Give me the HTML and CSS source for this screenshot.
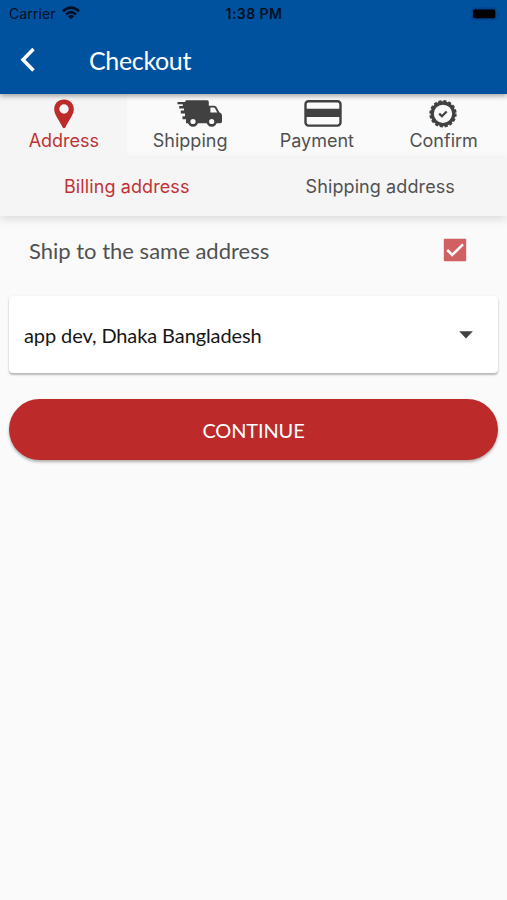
FILE: index.html
```html
<!DOCTYPE html>
<html lang="en">
<head>
<meta charset="utf-8">
<title>Checkout</title>
<link rel="stylesheet" href="styles.css">
</head>
<body>
<header class="appbar">
  <div class="status">
    <div class="carrier"><span>Carrier</span>
      <svg width="18" height="14" viewBox="0 0 18 14"><g fill="none" stroke="#001023" stroke-width="2.6"><path d="M1 5.2Q9-2 17 5.2"/><path d="M4 8.4Q9 4 14 8.4"/></g><path d="M5.9 10.2Q9 7.7 12.1 10.2L9 13.3Z" fill="#001023"/></svg>
    </div>
    <span class="clock">1:38 PM</span>
    <svg class="battery" width="30" height="14" viewBox="0 0 30 14"><rect x=".5" y=".8" width="25" height="12" rx="3.2" fill="#00458a" stroke="#00488f"/><rect x="2" y="2.4" width="22.3" height="8.8" rx="2" fill="#000"/><path d="M27 4.7q2 2.2 0 4.4z" fill="#003f80"/></svg>
  </div>
  <div class="titlebar">
    <svg class="back" width="16" height="26" viewBox="0 0 16 26"><path d="M13.5 2L3 12.7L13.5 23.4" fill="none" stroke="#fff" stroke-width="3.5"/></svg>
    <h1>Checkout</h1>
  </div>
</header>
<nav class="steps">
  <div class="step active">
    <svg width="22" height="30" viewBox="0 0 22 30"><path fill-rule="evenodd" d="M11 .5C5 .5 1.2 4.8 1.2 10.2C1.2 16 7.2 22.6 9.5 28.2Q11 30.2 12.5 28.2C14.8 22.6 20.8 16 20.8 10.2C20.8 4.8 17 .5 11 .5ZM11 5.3a4.7 4.7 0 1 1 0 9.4a4.7 4.7 0 1 1 0-9.4Z" fill="#bd2a2a"/></svg>
    <span>Address</span>
  </div>
  <div class="step">
    <svg class="truck" width="46" height="30" viewBox="0 0 46 30"><g fill="#414141"><path d="M9 1.3H30.2Q31.8 1.3 31.8 3V6.7H36.7Q38.3 6.7 39.5 8L42.3 13.2Q45 14 45 16.5V22.5Q45 24.3 43.2 24.3H9V20.2H5.5V17.2H8V14.6H3.8V11.6H7V9.6H2.2V6.9H5.8V5.3H.5V3H8Z"/></g><path d="M33.4 8.6h3.1q1 0 1.6.8l2.2 4.2h-6.9z" fill="#fafafa"/><g fill="#fafafa" stroke="#414141" stroke-width="2.6"><circle cx="16" cy="22.5" r="3.9"/><circle cx="34.7" cy="22.5" r="3.9"/></g></svg>
    <span>Shipping</span>
  </div>
  <div class="step">
    <svg class="card" width="38" height="30" viewBox="0 0 38 30"><rect x="1.5" y="2.2" width="35" height="24.4" rx="3" fill="none" stroke="#414141" stroke-width="2.4"/><path d="M1 9.8h36v8.2H1z" fill="#414141"/></svg>
    <span>Payment</span>
  </div>
  <div class="step">
    <svg class="badge" width="30" height="30" viewBox="0 0 30 30"><g fill="none" stroke="#414141"><circle cx="15" cy="14.8" r="10.8" stroke-width="3.3"/><circle cx="15" cy="14.8" r="12.5" stroke-width="2.4" stroke-dasharray="3.1 1.809"/><path d="M11.2 14.6l2.7 2.7 4.8-4.8" stroke-width="2.2"/></g></svg>
    <span>Confirm</span>
  </div>
</nav>
<nav class="subtabs">
  <span class="subtab active">Billing address</span>
  <span class="subtab">Shipping address</span>
</nav>
<main>
  <label class="same"><span>Ship to the same address</span>
    <svg width="24" height="24" viewBox="0 0 24 24"><rect x=".8" y=".8" width="22.4" height="22.4" rx="1" fill="#d16063"/><path d="M4.2 12l5 5L20 6.3" fill="none" stroke="#fff" stroke-width="2.5"/></svg>
  </label>
  <div class="select"><span>app dev, Dhaka Bangladesh</span>
    <svg width="14" height="8" viewBox="0 0 14 8"><path d="M.2.3h13.6L7 7.4z" fill="#424242"/></svg>
  </div>
  <button class="continue"><span>CONTINUE</span></button>
</main>
</body>
</html>
```
FILE: styles.css
```css
* { box-sizing: border-box; }
body { margin: 0; height: 900px; background: #fafafa; color: #515151; font-family: Lato, sans-serif; overflow: hidden; }
svg { display: block; flex: none; }
.appbar { position: relative; z-index: 2; height: 94px; background: #00529f; box-shadow: 0 2px 5px rgba(0,0,0,.35); }
.status { height: 28px; display: grid; grid-template-columns: 1fr auto 1fr; align-items: center; padding: 0 6px 0 9px; color: #001023; font: 14px/28px Inter, sans-serif; }
.carrier { display: flex; align-items: center; gap: 6px; letter-spacing: .1px; }
.carrier svg { margin-top: -2px; }
.clock { margin-left: -2px; font-weight: 600; font-size: 14px; letter-spacing: .45px; }
.battery { justify-self: end; margin-top: -1px; }
.titlebar { display: flex; align-items: center; height: 66px; padding-left: 20px; }
.back { margin-top: -3px; }
h1 { margin: 0 0 2px 53px; color: #fff; font-size: 25px; font-weight: 400; line-height: 30px; letter-spacing: -.35px; }
.steps { height: 64px; display: grid; grid-template-columns: repeat(4, 1fr); }
.step { display: flex; flex-direction: column; align-items: center; padding-top: 5px; font: 18px/23px Inter, sans-serif; }
.step.active { padding-left: 1px; background: #f5f5f5; color: #c03235; }
.truck { margin-left: 20px; }
.card { margin-left: 13px; }
.badge { margin-right: 1px; }
.subtabs { height: 58px; display: grid; grid-template-columns: 1fr 1fr; background: #f5f5f5; box-shadow: 0 3px 9px rgba(0,0,0,.13); text-align: center; font: 18px/57px Inter, sans-serif; letter-spacing: .1px; }
.subtab.active { color: #c03235; }
main { padding: 9px 9px 0; }
.same { height: 50px; display: flex; align-items: center; justify-content: space-between; padding: 0 31px 0 20px; font-size: 22px; }
.select { height: 77px; margin-top: 21px; padding: 0 25px 0 15px; display: flex; align-items: center; justify-content: space-between; background: #fff; border-radius: 4px; box-shadow: 0 2px 2px rgba(0,0,0,.25), 0 0 2px rgba(0,0,0,.08); color: #161616; font-size: 20px; letter-spacing: -.1px; }
.continue { display: block; width: 100%; height: 61px; margin-top: 26px; padding: 0; border: 0; border-radius: 30.5px; background: #bd2a2a; box-shadow: 0 2px 3px rgba(0,0,0,.3); color: #fff; font: 20px Lato, sans-serif; letter-spacing: -.15px; }
```
